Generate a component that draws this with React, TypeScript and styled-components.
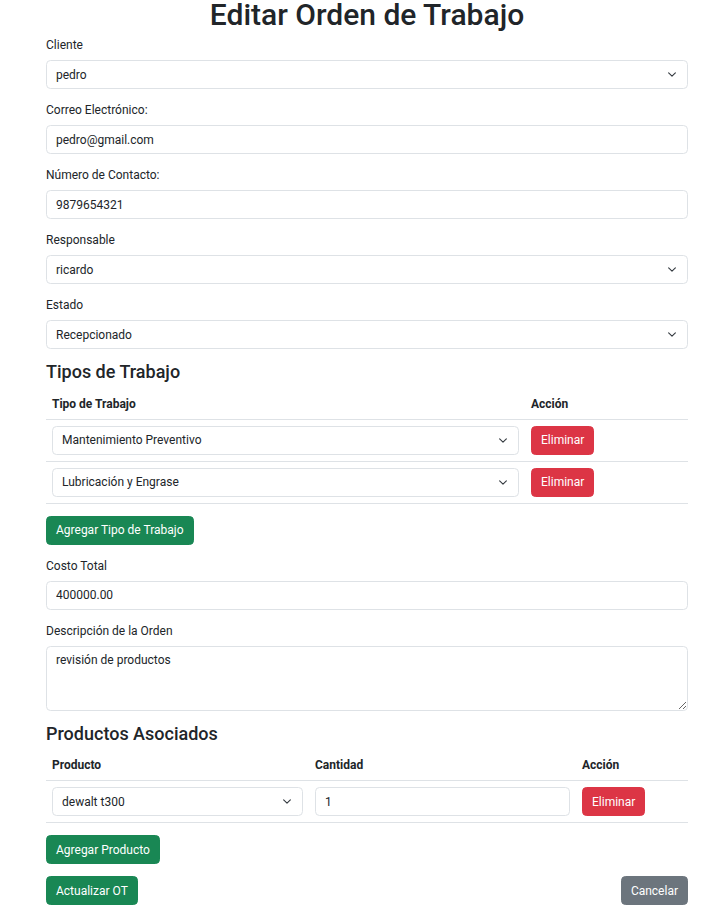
import styled, { createGlobalStyle } from 'styled-components';

const GlobalStyle = createGlobalStyle`
  html, body {
    margin: 0;
    padding: 0;
    background: #fff;
  }
  body {
    font-family: Roboto, "Noto Sans", "Liberation Sans", Arial, sans-serif;
    font-size: 12px;
    line-height: 1.5;
    color: #212529;
  }
  * {
    box-sizing: border-box;
  }
`;

const CHEVRON = "url(\"data:image/svg+xml,%3csvg xmlns='http://www.w3.org/2000/svg' viewBox='0 0 16 16'%3e%3cpath fill='none' stroke='%23343a40' stroke-linecap='round' stroke-linejoin='round' stroke-width='2' d='m2 5 6 6 6-6'/%3e%3c/svg%3e\")";

type Variant = 'success' | 'danger' | 'secondary';

const VARIANT_COLORS: Record<Variant, string> = {
  success: '#198754',
  danger: '#dc3545',
  secondary: '#6c757d',
};

export default function App() {
  return (
    <>
      <GlobalStyle />
      <Page>
        <Title>Editar Orden de Trabajo</Title>

        <Field>
          <Label>Cliente</Label>
          <Select defaultValue="pedro">
            <option value="pedro">pedro</option>
          </Select>
        </Field>
        <Field>
          <Label>Correo Electrónico:</Label>
          <Input defaultValue="pedro@gmail.com" />
        </Field>
        <Field>
          <Label>Número de Contacto:</Label>
          <Input defaultValue="9879654321" />
        </Field>
        <Field>
          <Label>Responsable</Label>
          <Select defaultValue="ricardo">
            <option value="ricardo">ricardo</option>
          </Select>
        </Field>
        <Field>
          <Label>Estado</Label>
          <Select defaultValue="Recepcionado">
            <option value="Recepcionado">Recepcionado</option>
          </Select>
        </Field>

        <SectionTitle>Tipos de Trabajo</SectionTitle>
        <Table>
          <colgroup>
            <col style={{ width: 479 }} />
            <col />
          </colgroup>
          <thead>
            <tr>
              <Th>Tipo de Trabajo</Th>
              <Th>Acción</Th>
            </tr>
          </thead>
          <tbody>
            {['Mantenimiento Preventivo', 'Lubricación y Engrase'].map(tipo => (
              <tr key={tipo}>
                <Td>
                  <Select defaultValue={tipo}>
                    <option value={tipo}>{tipo}</option>
                  </Select>
                </Td>
                <Td>
                  <Button $variant="danger">Eliminar</Button>
                </Td>
              </tr>
            ))}
          </tbody>
        </Table>
        <Field>
          <Button $variant="success">Agregar Tipo de Trabajo</Button>
        </Field>

        <Field>
          <Label>Costo Total</Label>
          <Input defaultValue="400000.00" />
        </Field>
        <Field>
          <Label>Descripción de la Orden</Label>
          <TextArea rows={3} defaultValue="revisión de productos" />
        </Field>

        <SectionTitle>Productos Asociados</SectionTitle>
        <Table>
          <colgroup>
            <col style={{ width: 263 }} />
            <col style={{ width: 267 }} />
            <col />
          </colgroup>
          <thead>
            <tr>
              <Th>Producto</Th>
              <Th>Cantidad</Th>
              <Th>Acción</Th>
            </tr>
          </thead>
          <tbody>
            <tr>
              <Td>
                <Select defaultValue="dewalt t300">
                  <option value="dewalt t300">dewalt t300</option>
                </Select>
              </Td>
              <Td>
                <Input defaultValue="1" />
              </Td>
              <Td>
                <Button $variant="danger">Eliminar</Button>
              </Td>
            </tr>
          </tbody>
        </Table>
        <Field>
          <Button $variant="success">Agregar Producto</Button>
        </Field>

        <Actions>
          <Button $variant="success">Actualizar OT</Button>
          <Button $variant="secondary">Cancelar</Button>
        </Actions>
      </Page>
    </>
  );
}

const Page = styled.div`
  width: 642px;
  margin: 0 0 0 46px;
  padding-bottom: 12px;
`;

const Title = styled.h1`
  margin: 0 0 6px;
  text-align: center;
  font-size: 30px;
  font-weight: 500;
  line-height: 30px;
`;

const Field = styled.div`
  margin-bottom: 12px;
`;

const Label = styled.label`
  display: inline-block;
  margin-bottom: 6px;
`;

const controlStyles = `
  display: block;
  width: 100%;
  padding: 4.5px 9px;
  font-family: inherit;
  font-size: 12px;
  line-height: 1.5;
  color: #212529;
  background-color: #fff;
  border: 1px solid #dee2e6;
  border-radius: 4.5px;
  outline: none;
`;

const Input = styled.input`
  ${controlStyles}
`;

const TextArea = styled.textarea`
  ${controlStyles}
  min-height: 65px;
`;

const Select = styled.select`
  ${controlStyles}
  appearance: none;
  padding-right: 27px;
  background-image: ${CHEVRON};
  background-repeat: no-repeat;
  background-position: right 9px center;
  background-size: 12px 9px;
`;

const SectionTitle = styled.h4`
  margin: 0 0 6px;
  font-size: 18px;
  font-weight: 500;
  line-height: 1.2;
`;

const Table = styled.table`
  width: 100%;
  margin-bottom: 12px;
  border-collapse: collapse;
  table-layout: fixed;
`;

const Th = styled.th`
  padding: 6px;
  text-align: left;
  font-weight: 700;
  border-bottom: 1px solid #dee2e6;
`;

const Td = styled.td`
  padding: 6px;
  vertical-align: top;
  border-bottom: 1px solid #dee2e6;
`;

const Button = styled.button<{ $variant: Variant }>`
  display: inline-block;
  padding: 4.5px 9px;
  font-family: inherit;
  font-size: 12px;
  line-height: 1.5;
  color: #fff;
  background-color: ${props => VARIANT_COLORS[props.$variant]};
  border: 1px solid ${props => VARIANT_COLORS[props.$variant]};
  border-radius: 4.5px;
  cursor: pointer;
`;

const Actions = styled.div`
  display: flex;
  justify-content: space-between;
  align-items: center;
`;
